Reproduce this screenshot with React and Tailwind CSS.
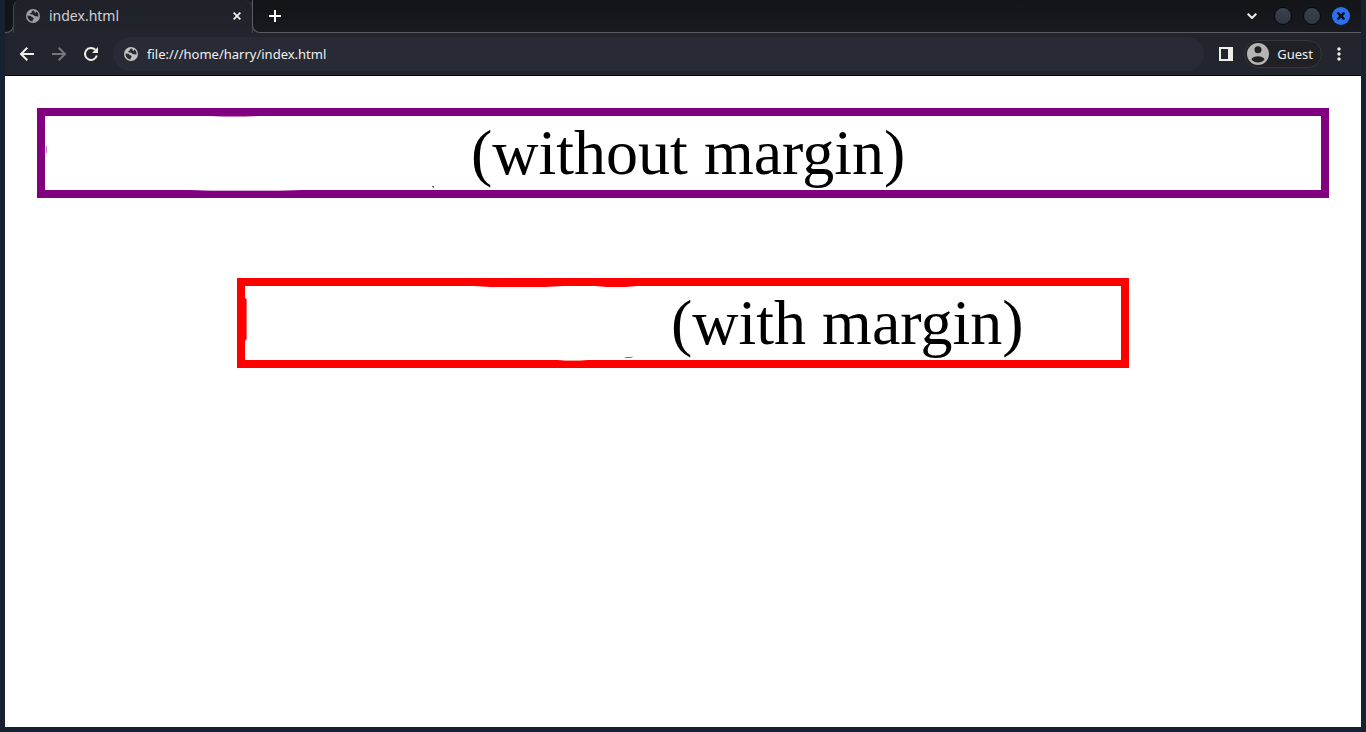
import React from "react";
import { MdMoreVert } from "react-icons/md";

function Globe({ className }) {
  return (
    <svg viewBox="0 0 14 14" className={className} aria-hidden="true">
      <path
        fill="currentColor"
        fillRule="evenodd"
        d="M7 0A7 7 0 1 1 7 14A7 7 0 0 1 7 0ZM7.6 1.5C6.2 1.9 5.6 2.6 5.5 3.7C4.4 3.8 4 4.6 4.5 5.3C5.6 5.6 7 5.3 7.8 6.3C8.3 7.2 8.9 7.5 10 7.3C11 7.1 11.8 7.5 12.4 7.8C12.8 5.6 12 3.5 10.5 2.4C10.3 3.4 9.6 3.8 8.5 3.6C8.9 2.6 8.5 2 7.6 1.5ZM1.5 6.6C1.4 9.6 3.4 12.2 6.4 12.6C6.7 11.9 6.4 11.2 7.2 10.6C8 9.9 7.6 8.7 6.5 8.3C5.3 7.9 5.2 7 4 6.8C3.1 6.6 2.2 6.8 1.5 6.6Z"
      />
    </svg>
  );
}

function Cross({ className }) {
  return (
    <svg viewBox="0 0 8 8" className={className} fill="none" stroke="currentColor" strokeWidth="1.9" aria-hidden="true">
      <path d="M0.6 0.6L7.4 7.4M7.4 0.6L0.6 7.4" />
    </svg>
  );
}

function ToolIcon({ children }) {
  return (
    <svg viewBox="0 0 20 20" className="size-5" fill="none" stroke="currentColor" strokeWidth="2" aria-hidden="true">
      {children}
    </svg>
  );
}

function TabStrip() {
  return (
    <div className="flex h-[33px] bg-[#23252e]">
      <div className="flex w-[9px] flex-col">
        <div className="h-4 bg-[#131418]" />
        <div className="flex-1 rounded-br-lg border-r border-b border-[#5b5d63] bg-[#131418]" />
      </div>
      <div className="-ml-px w-[240px] bg-linear-to-b from-[#15161a] from-50% to-transparent to-50%">
        <div className="flex h-full items-center gap-2 rounded-t-lg border-x border-[#44464d] bg-linear-to-b from-[#1f2028] to-[#23252e] pr-2 pb-px pl-3">
          <Globe className="size-3.5 text-[#9aa0a6]" />
          <span className="flex-1 pl-px text-sm leading-5 text-[#d0d2d6]">index.html</span>
          <button type="button" aria-label="Close tab" className="flex size-3.5 items-center justify-center text-[#eceae6]">
            <Cross className="size-2" />
          </button>
        </div>
      </div>
      <div className="-ml-px flex flex-1 items-center justify-between rounded-bl-lg border-b border-l border-[#5b5d63] bg-linear-to-b from-[#131418] to-[#191a1f] pr-[11px] pl-3">
        <button type="button" aria-label="New tab" className="flex size-5 items-center justify-center text-white">
          <svg viewBox="0 0 12 12" className="size-3" aria-hidden="true">
            <path fill="currentColor" d="M5 0H7V5H12V7H7V12H5V7H0V5H5Z" />
          </svg>
        </button>
        <div className="flex items-center">
          <button type="button" aria-label="Search tabs" className="mr-3 flex size-5 items-center justify-center text-[#f0eee9]">
            <svg viewBox="0 0 10 6" className="h-1.5 w-2.5" fill="none" stroke="currentColor" strokeWidth="2" aria-hidden="true">
              <path d="M0.7 0.7L5 5L9.3 0.7" />
            </svg>
          </button>
          <div className="flex items-center gap-[11px]">
            <button type="button" aria-label="Minimize" className="size-[18px] rounded-full border border-[#07080b] bg-linear-to-b from-[#3b4150] to-[#303541]" />
            <button type="button" aria-label="Maximize" className="size-[18px] rounded-full border border-[#07080b] bg-linear-to-b from-[#3b4150] to-[#303541]" />
            <button type="button" aria-label="Close" className="flex size-[18px] items-center justify-center rounded-full bg-[#2a71f1] text-[#0b0f18]">
              <svg viewBox="0 0 8 8" className="size-2" fill="none" stroke="currentColor" strokeWidth="2.4" aria-hidden="true">
                <path d="M0.5 0.5L7.5 7.5M7.5 0.5L0.5 7.5" />
              </svg>
            </button>
          </div>
        </div>
      </div>
    </div>
  );
}

function Toolbar() {
  return (
    <div className="flex h-[43px] items-center border-b border-[#0b0410] bg-[#23252e] px-3">
      <div className="flex items-center gap-3">
        <button type="button" aria-label="Back" className="text-[#f0eee9]">
          <ToolIcon>
            <path d="M17 10H4.5M10.3 3.7L4 10L10.3 16.3" />
          </ToolIcon>
        </button>
        <button type="button" aria-label="Forward" className="text-[#76777c]">
          <ToolIcon>
            <path d="M3 10H15.5M9.7 3.7L16 10L9.7 16.3" />
          </ToolIcon>
        </button>
        <button type="button" aria-label="Reload" className="text-[#f0eee9]">
          <ToolIcon>
            <path d="M15.8 11.5A6 6 0 1 1 14.3 5.8" />
            <path fill="currentColor" stroke="none" d="M17 3V9H11Z" />
          </ToolIcon>
        </button>
      </div>
      <div className="ml-3 flex h-[34px] flex-1 items-center gap-2 rounded-full bg-[#282a35] px-[11px]">
        <Globe className="size-3.5 text-[#c0c0c0]" />
        <input
          type="text"
          aria-label="Address"
          defaultValue="file:///home/harry/index.html"
          className="min-w-0 flex-1 bg-transparent pl-px text-[13px] leading-5 text-[#f0f0f0] outline-none"
        />
      </div>
      <div className="ml-3 flex items-center">
        <button type="button" aria-label="Side panel" className="flex size-5 items-center justify-center">
          <svg viewBox="0 0 14 14" className="size-3.5" aria-hidden="true">
            <path fill="#f0eee9" fillRule="evenodd" d="M0 0H14V14H0ZM2 2V12H9V2Z" />
          </svg>
        </button>
        <button type="button" className="ml-2 flex h-7 items-center gap-2 rounded-full border border-[#36373a] bg-[#202124] pr-2 pl-0.5 text-[13px] leading-5 text-[#f0f0f0]">
          <svg viewBox="0 0 22 22" className="size-[22px] text-[#b4b4b2]" aria-hidden="true">
            <path
              fill="currentColor"
              fillRule="evenodd"
              d="M11 0A11 11 0 1 1 11 22A11 11 0 0 1 11 0ZM11 3.3A3.5 3.5 0 1 0 11 10.3A3.5 3.5 0 0 0 11 3.3ZM11 13.2C8.2 13.2 5.3 14.5 4.4 16.2C6 18.3 8.4 19.4 11 19.4C13.6 19.4 16 18.3 17.6 16.2C16.7 14.5 13.8 13.2 11 13.2Z"
            />
          </svg>
          Guest
        </button>
        <button type="button" aria-label="Menu" className="ml-[7px] text-[#f0eee9]">
          <MdMoreVert className="size-5" />
        </button>
      </div>
    </div>
  );
}

export default function App() {
  return (
    <div className="flex min-h-screen flex-col bg-[#162232] px-[5px] pb-[5px] font-['Noto_Sans',sans-serif]">
      <header>
        <TabStrip />
        <Toolbar />
      </header>
      <main className="flex-1 bg-white p-8 font-['Liberation_Serif',serif] text-[64px] leading-[74px] text-black">
        <div className="relative border-8 border-[purple] pl-[426px]">
          <svg viewBox="0 0 424 76" className="absolute -top-px left-0 h-[76px] w-[424px]" aria-hidden="true">
            <path fill="#c77fc7" d="M165 1H214L200 1.9H178ZM1 31H2V38H1Z" />
            <path fill="#d8a8d8" d="M145 75H258L235 75.9H165Z" />
            <path fill="#777" d="M387 71H389V73H388V72H387Z" />
          </svg>
          (without margin)
        </div>
        <div className="relative mx-[200px] mt-20 border-8 border-[red] pl-[426px]">
          <svg viewBox="0 0 424 76" className="absolute -top-px left-0 h-[76px] w-[424px]" aria-hidden="true">
            <path fill="#f00" d="M229 1H318L300 2H245ZM350 1H392L380 2H362ZM0 13L1.6 14V54L0 56Z" />
            <path fill="#ffc8c0" d="M313 75H343L335 75.8H320Z" />
            <path fill="#777" d="M379 72H386L389 71L386 73H381Z" />
          </svg>
          (with margin)
        </div>
      </main>
    </div>
  );
}
